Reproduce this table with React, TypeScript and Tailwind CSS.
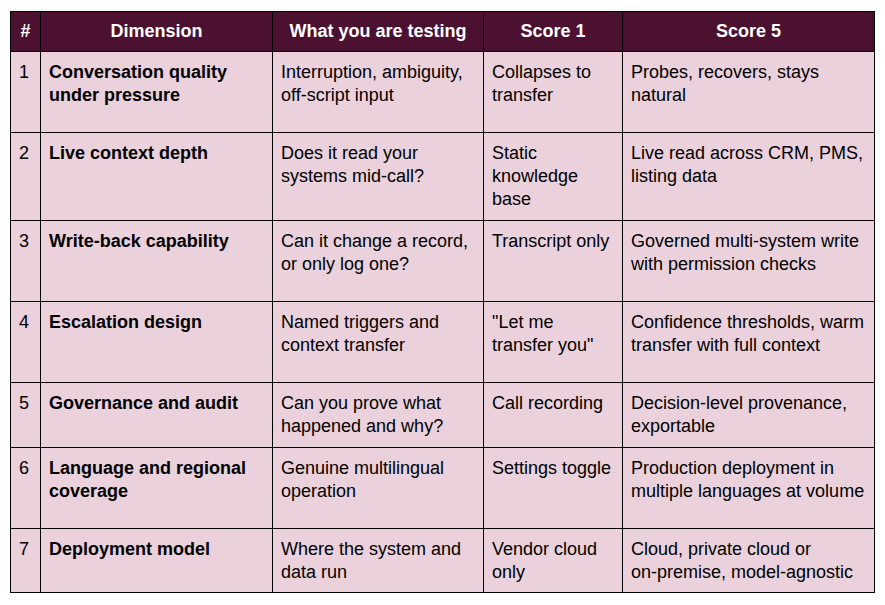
const rows: { n: string; dim: string; test: string; s1: string; s5: string; h: string }[] = [
  {
    n: "1",
    dim: "Conversation quality\nunder pressure",
    test: "Interruption, ambiguity,\noff-script input",
    s1: "Collapses to\ntransfer",
    s5: "Probes, recovers, stays\nnatural",
    h: "h-[81px]",
  },
  {
    n: "2",
    dim: "Live context depth",
    test: "Does it read your\nsystems mid-call?",
    s1: "Static\nknowledge\nbase",
    s5: "Live read across CRM, PMS,\nlisting data",
    h: "h-[88px]",
  },
  {
    n: "3",
    dim: "Write-back capability",
    test: "Can it change a record,\nor only log one?",
    s1: "Transcript only",
    s5: "Governed multi-system write\nwith permission checks",
    h: "h-[81px]",
  },
  {
    n: "4",
    dim: "Escalation design",
    test: "Named triggers and\ncontext transfer",
    s1: "\"Let me\ntransfer you\"",
    s5: "Confidence thresholds, warm\ntransfer with full context",
    h: "h-[81px]",
  },
  {
    n: "5",
    dim: "Governance and audit",
    test: "Can you prove what\nhappened and why?",
    s1: "Call recording",
    s5: "Decision-level provenance,\nexportable",
    h: "h-[65px]",
  },
  {
    n: "6",
    dim: "Language and regional\ncoverage",
    test: "Genuine multilingual\noperation",
    s1: "Settings toggle",
    s5: "Production deployment in\nmultiple languages at volume",
    h: "h-[81px]",
  },
  {
    n: "7",
    dim: "Deployment model",
    test: "Where the system and\ndata run",
    s1: "Vendor cloud\nonly",
    s5: "Cloud, private cloud or\non-premise, model-agnostic",
    h: "h-[64px]",
  },
];

const cell = "border border-black align-top pl-2 pr-1 pt-[9px] whitespace-pre";
const head = "border border-black text-center font-bold text-white whitespace-pre";

export default function App() {
  return (
    <div className="min-h-screen w-[885px] bg-white pl-[10px] pt-[11px] font-['Liberation_Sans',Arial,sans-serif] text-[18px] leading-[23px] text-black">
      <table className="w-[864px] table-fixed border-collapse">
        <colgroup>
          <col className="w-[30px]" />
          <col className="w-[232px]" />
          <col className="w-[211px]" />
          <col className="w-[139px]" />
          <col className="w-[252px]" />
        </colgroup>
        <thead>
          <tr className="h-[40px] bg-[#4c1130]">
            <th className={head}>#</th>
            <th className={head}>Dimension</th>
            <th className={head}>What you are testing</th>
            <th className={head}>Score 1</th>
            <th className={head}>Score 5</th>
          </tr>
        </thead>
        <tbody className="bg-[#ead1dc]">
          {rows.map((r) => (
            <tr key={r.n} className={r.h}>
              <td className={cell}>{r.n}</td>
              <td className={`${cell} font-bold`}>{r.dim}</td>
              <td className={cell}>{r.test}</td>
              <td className={cell}>{r.s1}</td>
              <td className={cell}>{r.s5}</td>
            </tr>
          ))}
        </tbody>
      </table>
    </div>
  );
}
